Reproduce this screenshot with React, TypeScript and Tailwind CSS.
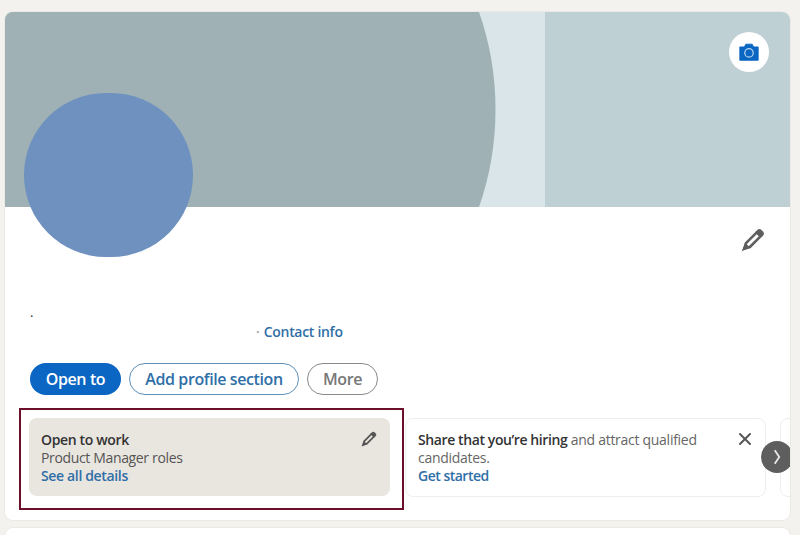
import { X } from "lucide-react";

const PencilIcon = ({ className }: { className: string }) => (
  <svg viewBox="0 0 24 24" className={className} fill="none" stroke="currentColor" strokeWidth="2.6">
    <path d="M3.5 20.5l1.5-5.4L15.8 4.3l3.9 3.9L8.9 19z" strokeLinejoin="round" />
    <path d="M15.8 4.3l1.2-1.2a2 2 0 0 1 2.8 0l1.1 1.1a2 2 0 0 1 0 2.8l-1.2 1.2z" fill="currentColor" strokeLinejoin="round" />
    <path d="M3 21l1.6-4 2.4 2.4z" fill="currentColor" />
  </svg>
);

const Banner = () => (
  <svg viewBox="0 0 785 195" preserveAspectRatio="none" className="block w-full h-full">
    <rect width="785" height="195" fill="#bfd0d4" />
    <rect x="400" width="140" height="195" fill="#d9e5e8" />
    <path d="M0 0H474C496 62 496 133 474 195H0Z" fill="#9fb1b5" />
  </svg>
);

export default function App() {
  return (
    <div className="h-[535px] w-[800px] overflow-hidden bg-[#f4f2ee] pt-3 pl-[5px] font-['Open_Sans',sans-serif]">
      <div className="relative h-[508px] w-[785px] overflow-hidden rounded-lg bg-white shadow-[0_0_0_1px_#ebe9e4]">
        <div className="relative h-[195px]">
          <Banner />
          <button className="absolute top-[20px] right-[21px] flex h-10 w-10 items-center justify-center rounded-full bg-white">
            <svg viewBox="0 0 24 24" className="h-[22px] w-[22px]">
              <path
                d="M2 6.5h5L8.5 3.5h7L17 6.5h5V21H2z"
                fill="#0a66c2"
                stroke="#0a66c2"
                strokeLinejoin="round"
              />
              <circle cx="12" cy="13" r="4.6" fill="none" stroke="#b9d2ea" strokeWidth="1.4" />
            </svg>
          </button>
        </div>

        <div className="absolute top-[81px] left-[19px] h-[164px] w-[169px] rounded-full bg-[#6e91bf]" />

        <div className="relative px-[25px]">
          <div className="flex justify-end pt-[21px]">
            <PencilIcon className="h-6 w-6 text-[#5f5f5f]" />
          </div>

          <p className="mt-[52px] h-4 text-[13px] leading-4 text-[#333]">.</p>

          <p className="mt-[2px] pl-[226px] text-[14px] leading-5 font-semibold tracking-[-0.3px] text-[#2f6fa8]">
            <span className="font-normal text-[#888]">· </span>
            <span className="ml-px">Contact info</span>
          </p>

          <div className="mt-[21px] flex gap-2">
            <button className="h-8 w-[91px] rounded-full bg-[#0a66c2] text-[16px] font-semibold tracking-[-0.4px] text-white">
              Open to
            </button>
            <button className="h-8 w-[170px] rounded-full border border-[#5d8fb8] text-[16px] font-semibold tracking-[-0.4px] text-[#2f6fa8]">
              Add profile section
            </button>
            <button className="h-8 w-[71px] rounded-full border border-[#8a8a8a] text-[16px] font-semibold tracking-[-0.4px] text-[#777]">
              More
            </button>
          </div>

          <div className="mt-[13px] flex items-start">
            <div className="-ml-[11px] h-[102px] w-[385px] shrink-0 border-2 border-[#6b0f2a] p-2">
              <div className="relative h-[78px] w-[361px] rounded-lg bg-[#e9e5df] px-3 py-[13px] text-[14px] leading-[18px] tracking-[-0.35px]">
                <p className="font-semibold text-[#333]">Open to work</p>
                <p className="text-[#555]">Product Manager roles</p>
                <p className="font-semibold text-[#2f6fa8]">See all details</p>
                <div className="absolute top-[13px] right-[13px]">
                  <PencilIcon className="h-4 w-4 text-[#555]" />
                </div>
              </div>
            </div>

            <div className="relative mt-[10px] ml-[1px] h-[79px] w-[361px] shrink-0 rounded-lg border border-[#eeeeee] px-3 py-[12px] text-[14px] leading-[18px] tracking-[-0.28px]">
              <p className="w-[300px] text-[#666]">
                <span className="font-semibold tracking-[-0.4px] text-[#333]">Share that you’re hiring</span> and attract qualified
                candidates.
              </p>
              <p className="font-semibold tracking-[-0.5px] text-[#2f6fa8]">Get started</p>
              <X className="absolute top-[10px] right-[10px] h-5 w-5 text-[#555]" strokeWidth={2.4} />
            </div>

            <div className="mt-[10px] ml-[14px] h-[79px] w-10 shrink-0 rounded-lg border border-[#eeeeee]" />
          </div>
        </div>

        <button className="absolute top-[429px] left-[756px] flex h-8 w-8 items-center justify-center rounded-full bg-[#5e5e5e]">
          <svg viewBox="0 0 16 24" className="h-[18px] w-3" fill="none" stroke="#e8e8e8" strokeWidth="2.4">
            <path d="M5 3l6 9-6 9" />
          </svg>
        </button>
      </div>

      <div className="mt-2 h-20 w-[785px] rounded-lg bg-white shadow-[0_0_0_1px_#ebe9e4]" />
    </div>
  );
}
